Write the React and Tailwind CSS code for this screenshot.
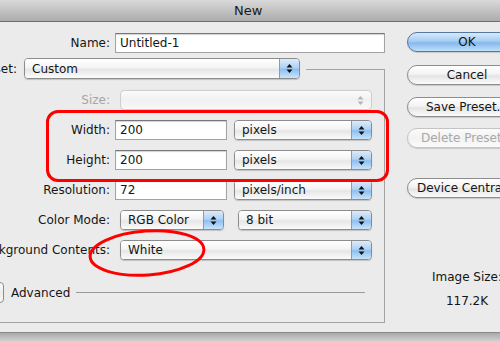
import React from "react";

function Arrows({ gray }) {
  return (
    <svg width="7" height="11" viewBox="0 0 7 11">
      <polygon points="3.5,1 6.5,4.5 0.5,4.5" fill={gray ? "#b5b5b5" : "#111"} />
      <polygon points="0.5,6.5 6.5,6.5 3.5,10" fill={gray ? "#b5b5b5" : "#111"} />
    </svg>
  );
}

function Select({ className, children, h21 }) {
  return (
    <div
      className={
        "flex shrink-0 rounded-[4px] border border-[#8c8c8c] overflow-hidden shadow-[0_1px_1px_rgba(0,0,0,0.18)] " +
        (h21 ? "h-[21px] " : "h-[20px] ") +
        className
      }
    >
      <div className="flex-1 flex items-center pl-[7px] whitespace-nowrap bg-[linear-gradient(to_bottom,#ffffff_0%,#f4f4f4_45%,#e6e6e6_55%,#fbfbfb_100%)]">
        {children}
      </div>
      <div className="w-[20px] border-l border-[#7f9cc4] flex items-center justify-center bg-[linear-gradient(to_bottom,#dcebfa_0%,#b0d2f3_45%,#8ebff0_55%,#c9e4fb_100%)]">
        <Arrows />
      </div>
    </div>
  );
}

function Input({ className, children }) {
  return (
    <div
      className={
        "h-[20px] shrink-0 bg-white border border-[#a2a2a2] border-t-[#777] shadow-[inset_0_1px_1px_rgba(0,0,0,0.18)] flex items-center pl-[4px] " +
        className
      }
    >
      {children}
    </div>
  );
}

function Label({ children, gray }) {
  return (
    <div className="w-[110px] shrink-0 flex justify-end">
      <span className={"whitespace-nowrap " + (gray ? "text-[#a6a6a6]" : "")}>{children}</span>
    </div>
  );
}

function Button({ children, primary, disabled }) {
  return (
    <div
      className={
        "h-[20px] w-[120px] rounded-full border flex items-center justify-center whitespace-nowrap shadow-[0_1px_1px_rgba(0,0,0,0.15)] " +
        (primary
          ? "border-[#56779f] bg-[linear-gradient(to_bottom,#d6e9fb_0%,#a7cdf2_45%,#84b9ee_55%,#bfe0fb_100%)]"
          : disabled
          ? "border-[#c4c4c4] text-[#a9a9a9] bg-[linear-gradient(to_bottom,#fbfbfb_0%,#f2f2f2_50%,#fafafa_100%)]"
          : "border-[#8d8d8d] bg-[linear-gradient(to_bottom,#ffffff_0%,#f3f3f3_45%,#e4e4e4_55%,#fbfbfb_100%)]")
      }
    >
      {children}
    </div>
  );
}

export default function App() {
  return (
    <div className="w-[500px] h-[341px] overflow-hidden relative bg-[#ebebeb] font-['DejaVu_Sans',sans-serif] text-[12px] leading-[14px] text-[#151515]">
      {/* title bar */}
      <div className="h-[22px] border-b border-[#6f6f6f] bg-[linear-gradient(to_bottom,#dadada_0%,#c2c2c2_50%,#acacac_100%)] flex items-center pl-[234px] text-[13px] text-[#1a1a1a]">
        New
      </div>

      {/* body */}
      <div className="h-[310px] flex">
        {/* left */}
        <div className="w-[385px] shrink-0 flex flex-col">
          <div className="mt-[11px] flex items-center h-[20px]">
            <Label>Name:</Label>
            <Input className="ml-[5px] w-[270px]">Untitled-1</Input>
          </div>

          <div className="mt-[16px] w-[385px] border-t border-r border-b border-[#a3a3a3] flex flex-col pb-[19px]">
            <div className="-mt-[12px] h-[21px] w-[306px] bg-[#ebebeb] flex items-center">
              <div className="w-[17px] shrink-0 flex justify-end">
                <span className="whitespace-nowrap">Preset:</span>
              </div>
              <Select h21 className="ml-[7px] w-[276px]">Custom</Select>
            </div>

            <div className="mt-[11px] h-[20px] flex items-center">
              <Label gray>Size:</Label>
              <div className="ml-[10px] w-[252px] h-[20px] rounded-[4px] border border-[#cdcdcd] bg-[linear-gradient(to_bottom,#fbfbfb,#f1f1f1_50%,#f8f8f8)] flex items-center justify-end pr-[7px]">
                <Arrows gray />
              </div>
            </div>

            <div className="mt-[10px] h-[20px] flex items-center">
              <Label>Width:</Label>
              <Input className="ml-[5px] w-[112px]">200</Input>
              <Select className="ml-[7px] w-[138px]">pixels</Select>
            </div>

            <div className="mt-[10px] h-[20px] flex items-center">
              <Label>Height:</Label>
              <Input className="ml-[5px] w-[112px]">200</Input>
              <Select className="ml-[7px] w-[138px]">pixels</Select>
            </div>

            <div className="mt-[10px] h-[20px] flex items-center">
              <Label>Resolution:</Label>
              <Input className="ml-[5px] w-[112px]">72</Input>
              <Select className="ml-[7px] w-[138px]">pixels/inch</Select>
            </div>

            <div className="mt-[10px] h-[20px] flex items-center">
              <Label>Color Mode:</Label>
              <Select className="ml-[10px] w-[104px]">RGB Color</Select>
              <Select className="ml-[14px] w-[134px]">8 bit</Select>
            </div>

            <div className="mt-[10px] h-[20px] flex items-center">
              <Label>Background Contents:</Label>
              <Select className="ml-[10px] w-[252px]">White</Select>
            </div>

            <div className="mt-[22px] h-[21px] flex items-center">
              <div className="-ml-[14px] w-[18px] h-[21px] shrink-0 rounded-[4px] border border-[#8c8c8c] bg-[linear-gradient(to_bottom,#ffffff,#ececec_50%,#fafafa)]" />
              <span className="ml-[7px]">Advanced</span>
              <div className="ml-[6px] w-[289px] h-px bg-[#9a9a9a]" />
            </div>
          </div>
        </div>

        {/* right */}
        <div className="ml-[22px] w-[120px] shrink-0 flex flex-col items-center">
          <div className="mt-[10px]">
            <Button primary>OK</Button>
          </div>
          <div className="mt-[13px]">
            <Button>Cancel</Button>
          </div>
          <div className="mt-[12px]">
            <Button>Save Preset...</Button>
          </div>
          <div className="mt-[11px]">
            <Button disabled>Delete Preset...</Button>
          </div>
          <div className="mt-[30px]">
            <Button>Device Central...</Button>
          </div>
          <div className="mt-[72px] whitespace-nowrap">Image Size:</div>
          <div className="mt-[10px] whitespace-nowrap">117.2K</div>
        </div>
      </div>

      {/* bottom edge */}
      <div className="h-[9px] border-t border-[#8a8a8a] bg-[linear-gradient(to_bottom,#a9a9a9,#cfcfcf)]" />

      {/* annotations */}
      <div className="absolute left-[46px] top-[110px] w-[343px] h-[72px] border-[3px] border-[#ff0000] rounded-[12px] pointer-events-none" />
      <svg className="absolute left-0 top-0 pointer-events-none" width="500" height="341">
        <ellipse cx="147" cy="253" rx="57" ry="22" fill="none" stroke="#ff0000" strokeWidth="3" transform="rotate(-4 147 253)" />
      </svg>
    </div>
  );
}
